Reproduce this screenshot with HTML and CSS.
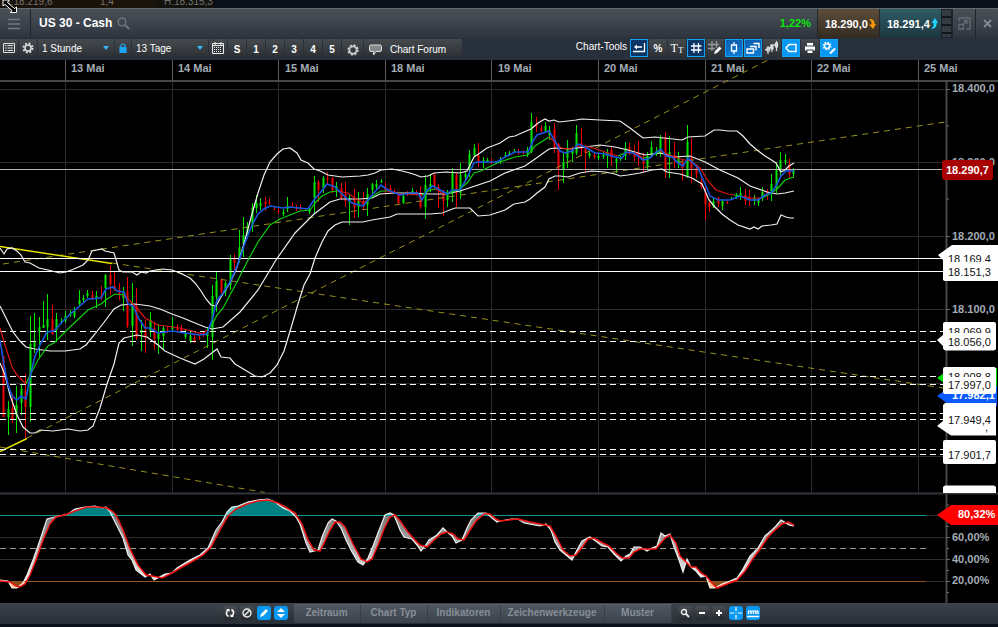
FILE: index.html
```html
<!DOCTYPE html>
<html lang="de">
<head>
<meta charset="utf-8">
<title>US 30 - Cash</title>
<link rel="stylesheet" href="styles.css">
</head>
<body>
<div class="strip"><span class="strip-price">t:18.219,6</span><span class="strip-spread">1,4</span><span>H:18.315,3</span>
  <svg class="cursor" width="20" height="16" viewBox="0 0 20 16"><path d="M3 0V6L5 4.500 12 10.500 10.500 12.500H16.500V7L14.500 8.500 7.500 2.500 9 0Z" fill="#000" stroke="#fff"/></svg>
</div>
<header class="titlebar">
  <button class="menu" aria-label="Menü"><svg width="14" height="12" viewBox="0 0 14 12"><path d="M1 1.500H13M1 6H13M1 10.500H13" stroke="#737a81" stroke-width="1.500"/></svg></button>
  <h1>US 30 - Cash</h1>
  <button class="search" aria-label="Suchen"><svg width="13" height="13" viewBox="0 0 13 13"><circle cx="5" cy="5" r="3.800" fill="none" stroke="#737a81" stroke-width="1.300"/><path d="M8 8L12 12" stroke="#737a81" stroke-width="1.800"/></svg></button>
  <span class="change">1,22%</span>
  <button class="quote sell">18.290,0<svg width="7" height="12" viewBox="0 0 7 12"><path d="M0 1C4 1 6 3 5.500 6H7L4 11 0 6.500H2.500C3 4 2 2.500 0 1Z" fill="#f90"/></svg></button>
  <button class="quote buy">18.291,4<svg width="7" height="12" viewBox="0 0 7 12"><path d="M0 11C4 11 6 8 5.500 5H7L4 0 0.500 5H2.500C3 8 2 9 0 11Z" fill="#1fd5ff"/></svg></button>
  <span class="ladder"></span>
  <button class="win" aria-label="Fenster lösen"><svg width="13" height="13" viewBox="0 0 13 13" fill="none" stroke="#646b73" stroke-width="1.300"><path d="M1 4.500V1H12V12H8.500M1 7.500H5.500V12H1ZM5.500 7L9 3.500M5.500 3.500H9V7"/></svg></button>
  <button class="win" aria-label="Schließen"><svg width="9" height="9" viewBox="0 0 9 9"><path d="M1 1L8 8M8 1L1 8" stroke="#858b92" stroke-width="1.800"/></svg></button>
</header>
<nav class="toolbar">
  <button class="tool" aria-label="Liste"><svg width="12" height="10" viewBox="0 0 12 10"><path d="M.5.5H11.500V9.500H.5ZM2 2.500H3.500M4.500 2.500H10M2 5H3.500M4.500 5H10M2 7.500H3.500M4.500 7.500H10" fill="none" stroke="#ddd"/></svg></button>
  <button class="tool" aria-label="Einstellungen"><svg width="12" height="12" viewBox="0 0 12 12"><circle cx="6" cy="6" r="4.500" fill="none" stroke="#ddd" stroke-width="2" stroke-dasharray="2 1.530"/><circle cx="6" cy="6" r="3" fill="none" stroke="#ddd" stroke-width="1.500"/></svg></button>
  <span class="pick"><select aria-label="Intervall"><option>1 Stunde</option></select></span>
  <button class="tool lock" aria-label="Sperren"><svg width="8" height="10" viewBox="0 0 8 10"><path d="M1 4.500H7V9.500H1Z" fill="#1fa7f5"/><path d="M2 5V2.500Q2 1 4 1T6 2.500V5M1 4.500H7V9.500H1Z" fill="none" stroke="#1fa7f5" stroke-width="1.200"/></svg></button>
  <span class="pick"><select aria-label="Zeitspanne"><option>13 Tage</option></select></span>
  <button class="tool" aria-label="Kalender"><svg width="12" height="12" viewBox="0 0 12 12"><path d="M.5 1.500H11.500V11.500H.5ZM.5 3.500H11.500M3 0V3M9 0V3" fill="none" stroke="#eee"/><path d="M2 5.500H10M2 7.500H10M2 9.500H10" stroke="#eee" stroke-dasharray="1 1"/></svg></button>
  <button class="tool num">S</button><button class="tool num">1</button><button class="tool num">2</button><button class="tool num">3</button><button class="tool num">4</button><button class="tool num">5</button>
  <button class="tool wide" aria-label="Optionen"><svg width="12" height="12" viewBox="0 0 12 12"><circle cx="6" cy="6" r="4.700" fill="none" stroke="#ccc" stroke-width="2" stroke-dasharray="2 1.690"/><circle cx="6" cy="6" r="3.600" fill="none" stroke="#ccc" stroke-width="1.800"/></svg></button>
  <button class="tool forum"><svg width="13" height="12" viewBox="0 0 13 12"><path d="M2 1H11Q12.500 1 12.500 2.500V6Q12.500 7.500 11 7.500H7L4.500 11V7.500H2Q.5 7.500.5 6V2.500Q.5 1 2 1Z" fill="#888" stroke="#ddd"/></svg>Chart Forum</button>
  <span class="tools-label">Chart-Tools</span>
  <button class="tool on dark" aria-label="Zurück"><svg width="14" height="14" viewBox="0 0 14 14" fill="none" stroke="#fff" stroke-width="1.300"><path d="M12.500 2V10.500H1M10 6H4"/><path d="M2 6L5 3.500V8.500Z" fill="#fff" stroke="none"/></svg></button>
  <button class="tool percent">%</button>
  <button class="tool type">T<small>T</small></button>
  <button class="tool on dark" aria-label="Gitter"><svg width="12" height="12" viewBox="0 0 12 12"><path d="M4 1V11M8.500 1V11M1 4H11.500M1 8H11.500" stroke="#fff" stroke-width="1.300"/></svg></button>
  <button class="tool" aria-label="Gitter bearbeiten"><svg width="14" height="14" viewBox="0 0 14 14"><path d="M4 0V10M8.500 0V7M0 3.500H11M0 7.500H7" stroke="#999" stroke-width="1.300"/><path d="M6 13L7 10 11.500 5.500 13.500 7.500 9 12Z" fill="#fff"/></svg></button>
  <button class="tool on" aria-label="Kerze"><svg width="10" height="12" viewBox="0 0 10 12"><path d="M5 0V3M5 9V12M2.500 3H7.500V9H2.500Z" fill="none" stroke="#fff" stroke-width="1.300"/></svg></button>
  <button class="tool on" aria-label="Ebenen"><svg width="14" height="12" viewBox="0 0 14 12" fill="none" stroke="#fff" stroke-width="1.400"><path d="M1 7H7.500V11H1ZM4 4.500H10V8.500M7.500 1.500H13V6"/></svg></button>
  <button class="tool" aria-label="Charttyp"><svg width="14" height="14" viewBox="0 0 14 14" fill="none" stroke="#ddd" stroke-width="1.200"><path d="M3 5V13M2 7H4.500V10H2ZM7 3V11M6 4H8V8H6ZM11.500 0V10M10.500 2H12.500V6H10.500ZM0 9L13 2"/></svg></button>
  <button class="tool on flat" aria-label="Etikett"><svg width="12" height="10" viewBox="0 0 12 10"><path d="M1 5L4 1.500H11V8.500H4Z" fill="none" stroke="#fff" stroke-width="1.400"/></svg></button>
  <button class="tool" aria-label="Drucken"><svg width="12" height="12" viewBox="0 0 12 12"><path d="M3 1H9V3.500H3ZM1 4.500H11V8.500H9.500V7.500H2.500V8.500H1ZM3.500 8.500H8.500V11H3.500Z" fill="#fff"/></svg></button>
  <button class="tool on flat last" aria-label="Zeichnen"><svg width="14" height="14" viewBox="0 0 14 14"><circle cx="5" cy="5" r="2.500" fill="none" stroke="#fff" stroke-width="1.400"/><circle cx="5" cy="5" r="3.800" fill="none" stroke="#fff" stroke-width="1.200" stroke-dasharray="1.500 1.480"/><path d="M8 12.500L13 7.500" stroke="#fff" stroke-width="2.200"/></svg></button>
</nav>
<main>
<svg class="chart" viewBox="0 60 998 543" role="img" aria-label="US 30 Chart">
  <defs>
    <clipPath id="high"><path d="M0 494H945V515.500H0Z"/></clipPath>
    <clipPath id="low"><path d="M0 581.500H945V603H0Z"/></clipPath>
    <linearGradient id="gap" gradientUnits="userSpaceOnUse" x1="0" y1="515" x2="0" y2="582"><stop offset="0" stop-color="#777"/><stop offset="1" stop-color="#eee"/></linearGradient>
  </defs>
  <path class="grid" d="M65.500 82V493M172.500 82V493M278.500 82V493M385.500 82V493M491.500 82V493M598.500 82V493M705.500 82V493M811.500 82V493M918.500 82V493M0 89.500H945M0 162.500H945M0 236.500H945M0 309.500H945M0 383.500H945M0 456.500H945M0 537.500H945M0 559.500H945M926 515.500H945M926 581.500H945"/>
  <path class="daymark" d="M65.500 60V80M172.500 60V80M278.500 60V80M385.500 60V80M491.500 60V80M598.500 60V80M705.500 60V80M811.500 60V80M918.500 60V80"/>
  <path d="M0 81H998" stroke="#484848" stroke-width="2"/>
  <path d="M946.500 82V603" stroke="#484848" stroke-width="2"/>
  <path d="M946 89.500H950M946 126H949M946 162.500H950M946 199H949M946 236.500H950M946 309.500H950M946 505H949M946 526.500H949M946 537.500H950M946 548.500H949M946 559.500H950M946 570.500H949M946 581.500H950M946 592.500H949" stroke="#666"/>
  <g class="axis">
    <text x="71" y="72">13 Mai</text><text x="178" y="72">14 Mai</text><text x="285" y="72">15 Mai</text><text x="391" y="72">18 Mai</text><text x="498" y="72">19 Mai</text><text x="604" y="72">20 Mai</text><text x="711" y="72">21 Mai</text><text x="817" y="72">22 Mai</text><text x="924" y="72">25 Mai</text>
    <text x="952" y="92">18.400,0</text><text x="952" y="166">18.300,0</text><text x="952" y="240">18.200,0</text><text x="952" y="313">18.100,0</text>
    <text x="952" y="541">60,00%</text><text x="952" y="563">40,00%</text><text x="952" y="584">20,00%</text>
  </g>
  <g id="candles"></g>
  <path class="trend dashed" d="M112 263L943 388M27 438L768 60M3 264L945 122M0 447L265 492.500"/>
  <path class="trend" d="M0 246.500L112 263.500M0 451.500L27 438.500"/>
  <path d="M0 169.500H945" stroke="#b4b4b4"/>
  <path class="level" d="M0 258.500H945M0 271.500H998"/>
  <path class="level dashes" d="M0 331.500H945M0 341.500H945M0 376.500H945M0 384.500H945M0 413.500H945M0 419.500H945M0 449.500H945M0 454.500H945"/>
  <polyline class="band" points="0,248 4,254 7,249 12,248 17,251 21,255 25,262 30,263 39,268 48,270 60,273 66,272 74,269 83,265 88,260 92,251 102,249 105,251 114,253 119,270 123,272 132,272 137,275 141,272 146,273 150,271 163,269 172,270 180,273 190,278 195,283 201,291 206,299 211,305 216,306 221,297 230,283 236,270 240,257 245,240 252,214 258,193 264,175 270,162 277,154 283,149 290,148 297,153 301,160 308,163 314,169 320,171 328,175 342,177 360,176 368,175 375,173 381,170 392,169 402,171 410,173 416,175 421,177 428,176 434,173 446,172 460,173 467,171 474,157 480,153 487,148 495,145 500,143 509,137 515,136 524,132 531,129 538,123 545,119 549,121 554,120 559,122 568,121 576,120 582,119 600,120 620,121 630,128 643,138 655,137 664,138 682,140 688,137 705,136 714,130 720,130 728,131 737,131 743,136 750,144 757,150 765,156 770,159 776,163 781,172 785,170 789,166 794,163"/>
  <polyline class="band" points="0,306 6,318 13,332 20,341 26,347 35,349 50,351 65,351 80,349 86,345 95,334 105,321 114,309 121,305 135,304 150,306 160,309 172,314 183,318 195,323 205,327 212,329 223,327 240,312 258,290 276,260 295,233 314,214 330,202 340,199 360,199 372,198 380,194 395,193 410,193 430,194 445,194 460,191 475,186 490,181 505,173 525,166 535,159 549,149 555,148 570,149 585,147 600,145 615,147 628,150 645,155 660,153 675,157 690,156 705,162 720,170 738,178 750,186 767,192 777,194 785,193 794,191"/>
  <polyline class="band" points="0,363 5,375 10,395 17,415 23,427 30,433 35,433 40,430 53,431 68,429 80,431 88,430 93,426 100,408 107,384 114,364 119,343 124,338 137,335 147,337 158,345 165,351 180,358 195,364 204,359 217,349 221,357 230,358 235,364 245,370 255,376 262,377 270,373 277,365 284,351 291,328 298,304 304,285 310,274 315,258 322,242 328,231 335,225 342,222 363,222 372,220 390,217 397,214 430,214 442,213 455,208 470,208 478,216 490,215 505,210 514,204 525,202 530,199 537,193 545,187 549,179 555,176 560,176 568,177 580,173 592,171 605,172 615,174 620,176 628,175 640,173 652,170 662,169 667,172 680,174 692,178 702,184 709,200 714,206 722,214 730,220 738,225 750,229 754,227 758,229 762,226 771,225 777,224 781,215 786,217 790,218 794,218"/>
  <path class="up" d="M26 384L30 375 38 360 48 346 54 343 70 327 88 310 101 304 107 299 115 294 123 295M207 330L212 325 217 315 223 308 230 295 238 280 247 262 258 242 270 225 280 219 300 211 310 210 316 202 322 196 330 192 337 191M367 201L376 194 381 191 387 191M422 195L430 190 436 189M447 194L460 189 468 182 474 173 481 171 497 163 515 157 528 155 535 146 549 137M618 156L625 153M643 158L650 157 660 151M734 195L742 196M762 198L770 194 778 188 785 180 794 177"/>
  <path class="down" d="M0 328L5 345 12 367 17 375 26 384M123 295L130 301 136 307 145 318 158 325 180 328 203 334 207 330M337 191L348 193 356 199 362 202 367 201M387 191L400 194 422 195M436 189L442 193 447 194M549 137L555 142 561 148 570 149 577 146 590 147 605 152 618 156M625 153L636 153 643 158M660 151L672 156 684 160 690 160 700 168 708 181 716 190 728 194 734 195M742 196L750 198 762 198"/>
  <polyline class="fast" points="0,340 4,365 8,385 12,396 17,400 21,396 26,399 30,377 35,356 41,343 47,332 54,331 65,319 75,310 88,299 101,298 106,289 113,287 117,291 124,292 128,304 133,306 139,319 145,328 150,328 158,333 172,331 185,333 200,335 207,334 212,320 217,300 223,293 230,282 238,264 245,243 252,225 258,214 264,209 270,206 283,208 290,207 308,209 314,200 320,193 327,184 335,187 342,194 352,203 363,206 372,195 381,185 388,190 400,195 412,193 418,193 422,200 427,190 433,186 440,190 447,194 452,190 460,190 467,178 474,163 478,162 497,162 505,157 515,152 528,152 533,141 537,135 549,131 555,141 560,151 565,153 572,151 578,144 585,147 595,153 605,154 615,157 622,158 626,152 634,153 643,160 650,158 655,153 661,149 666,156 672,157 678,163 683,166 688,158 698,168 705,184 710,196 718,200 730,200 740,196 750,200 758,200 765,195 771,193 776,186 781,176 786,171 794,171"/>
  <g id="oscillator"></g>
  <path d="M0 515.500H926" stroke="#109a9a"/><path d="M0 581.500H926" stroke="#95541f"/>
  <path d="M0 548.500H926" stroke="#999" stroke-dasharray="6 4"/>
  <g id="osc-lines"></g>
  <path d="M0 493.500H998" stroke="#31373d" stroke-width="2"/>
  <g class="tag">
    <path d="M938 255L952 245H998V281H945L943 279V260Z"/><text x="948" y="263">18.169,4</text>
    <rect x="943" y="262" width="53" height="19" rx="2"/><text x="948" y="276">18.151,3</text>
    <rect x="943" y="322" width="53" height="28" rx="2"/><text x="948" y="336">18.069,9</text>
    <path d="M937 340L943 335 945 333H996V349L994 350.500H945L943 346Z"/><text x="948" y="346">18.056,0</text>
    <path class="tag-green" d="M937 378L951 368H997V388H951Z"/>
    <rect x="943" y="367" width="53" height="26" rx="2"/><text x="948" y="381">18.008,8</text>
    <path class="tag-blue" d="M937 396L951 386H997V406H951Z"/><text class="tag-light" x="952" y="399">17.982,1</text>
    <rect x="943" y="377" width="53" height="17" rx="2"/><text x="948" y="389">17.997,0</text>
    <path d="M937 426L943 421V405L945 403H996V435.500H951Z"/><text x="948" y="424">17.949,4</text><text x="985" y="431">,</text>
    <rect x="943" y="440" width="53" height="24" rx="2"/><text x="948" y="459">17.901,7</text>
    <path d="M943 493V487L945 485.500H994L996 487V493Z"/>
    <path class="tag-red" d="M937 515L951 505H998V525H951Z"/><text class="tag-light" x="958" y="518">80,32%</text>
    <rect class="tag-price" x="942" y="160" width="51" height="20" rx="3"/><text class="tag-light" x="946" y="174">18.290,7</text>
  </g>
</svg>
</main>
<footer class="bottom">
  <div class="rounds">
    <button class="round" aria-label="Neu laden"><svg width="10" height="10" viewBox="0 0 10 10" fill="none" stroke="#fff" stroke-width="1.500"><path d="M3.500 8.500Q1 7 1.500 4.500T4 1.500M6.500 1.500Q9 3 8.500 5.500T6 8.500"/><path d="M1 1H4.500V4ZM9 9H5.500V6Z" fill="#fff" stroke="none"/></svg></button>
    <button class="round" aria-label="Deaktivieren"><svg width="10" height="10" viewBox="0 0 10 10" fill="none" stroke="#eee" stroke-width="1.400"><circle cx="5" cy="5" r="4"/><path d="M2 8L8 2"/></svg></button>
    <button class="round blue" aria-label="Stift"><svg width="10" height="10" viewBox="0 0 10 10"><path d="M1 9L2 6 7 1 9 3 4 8Z" fill="#fff"/></svg></button>
    <button class="round blue" aria-label="Höhe"><svg width="10" height="10" viewBox="0 0 10 10"><path d="M5 0L9 4H1ZM5 10L9 6H1Z" fill="#fff"/></svg></button>
  </div>
  <div class="tabs"><button>Zeitraum</button><button>Chart Typ</button><button>Indikatoren</button><button>Zeichenwerkzeuge</button><button>Muster</button></div>
  <div class="rounds">
    <button class="round" aria-label="Lupe"><svg width="10" height="10" viewBox="0 0 10 10" fill="none" stroke="#eee"><circle cx="4" cy="4" r="2.500" stroke-width="1.400"/><path d="M6 6L9 9" stroke-width="1.800"/></svg></button>
    <button class="round" aria-label="Verkleinern"><svg width="10" height="10" viewBox="0 0 10 10"><path d="M2 5H8" stroke="#fff" stroke-width="2"/></svg></button>
    <button class="round" aria-label="Vergrößern"><svg width="10" height="10" viewBox="0 0 10 10"><path d="M2 5H8M5 2V8" stroke="#fff" stroke-width="2"/></svg></button>
    <button class="round blue" aria-label="Fadenkreuz"><svg width="12" height="12" viewBox="0 0 12 12"><path d="M0 6H4M8 6H12M6 0V4M6 8V12M5.500 6H6.500" stroke="#fff" stroke-width="1.200"/></svg></button>
    <button class="round blue" aria-label="Werte"><svg width="12" height="10" viewBox="0 0 12 10"><path d="M0 8.500H12M1.500 3V6M4 3V6M6.500 3V6M9 3V6M11 3V6" stroke="#fff" stroke-width="1.400"/><path d="M1 3H11" stroke="#fff"/></svg></button>
  </div>
</footer>
<script src="chart.js"></script>
</body>
</html>
```
FILE: styles.css
```css
* { box-sizing: border-box; }
body { margin: 0; min-height: 100vh; background: #0b1119; font-family: "Liberation Sans", Arial, sans-serif; font-size: 10px; color: #fff; }
button, select { font: inherit; color: inherit; border: 0; margin: 0; padding: 0; background: none; border-radius: 0; }
svg { display: block; }

.strip { display: flex; height: 8px; overflow: hidden; background: linear-gradient(90deg, #17110a 0, #1c140a 150px, #11110f 165px, #11110f 213px, #0a1119 216px); color: #77736d; line-height: 3px; }
.strip-price { flex: 0 0 92px; padding-left: 8px; }
.strip-spread { flex: 0 0 72px; padding-left: 8px; }
.cursor { position: fixed; top: 0; left: 0; z-index: 2; }

.titlebar { display: flex; align-items: stretch; height: 30px; border-top: 1px solid #656b71; background: linear-gradient(#4a5158, #2d343e); }
.menu { width: 31px; padding-left: 7px; border-right: 1px solid #1f252c; }
.titlebar h1 { margin: 0; padding-left: 8px; font-size: 12px; line-height: 28px; }
.search { padding-left: 5px; }
.change { margin-left: auto; padding-right: 6px; font-size: 11px; font-weight: bold; line-height: 28px; color: #0ce60c; }
.quote { display: flex; align-items: center; width: 62px; padding-left: 7px; gap: 1px; font-size: 11px; font-weight: bold; border-left: 1px solid #20262c; }
.sell { background: linear-gradient(#5c4d38, #332c22); }
.buy { background: linear-gradient(#315c66, #1c363f); }
.ladder { width: 11px; border: 1px solid #1c2229; background: repeating-linear-gradient(#343b43 0 6px, #12171c 6px 8px); }
.win { display: flex; align-items: center; justify-content: center; width: 23px; border-left: 1px solid #20262c; }

.toolbar { display: flex; align-items: flex-start; gap: 1px; height: 22px; padding-top: 1px; background: #28303b; }
.tool { display: flex; align-items: center; justify-content: center; width: 18px; height: 18px; flex: none; background: linear-gradient(#454a4f, #2c3035); }
.num, .percent { font-weight: bold; }
.num, .wide, .forum { padding-top: 3px; }
.lock { width: 16px; }
.wide { width: 21px; }
.forum { width: 98px; justify-content: flex-start; padding-left: 5px; gap: 8px; }
.type { font: 12px "Liberation Serif", serif; }
.type small { font-size: 9px; padding-top: 3px; }
.pick { display: grid; width: 76px; height: 18px; background: linear-gradient(#454a4f, #2c3035); }
.pick select { grid-area: 1 / 1; appearance: none; padding-left: 4px; width: 100%; }
.pick option { color: #000; }
.pick::after { content: ""; grid-area: 1 / 1; align-self: center; justify-self: end; width: 6px; height: 4px; margin-right: 5px; background: #35b8ff; clip-path: polygon(0 0, 100% 0, 50% 100%); pointer-events: none; }
.tools-label { margin-left: auto; padding-right: 2px; line-height: 16px; }
.on { border: 1px solid #16a0f0; background: linear-gradient(#0c5fb0, #0d78d2); }
.on.dark { background: #0a3566; }
.on.flat { background: #0798f4; }
.last { margin-right: 160px; }

main { background: #000; }
.chart { width: 100%; height: auto; font: bold 11px "Liberation Sans", Arial, sans-serif; fill: none; }
.grid { stroke: #2c2c2c; }
.daymark { stroke: #5a5a5a; }
.axis { fill: #a4acb6; }
.trend { stroke: #e6e600; stroke-width: 1.4; }
.trend.dashed { stroke: #99901a; stroke-width: 1; stroke-dasharray: 6 5; }
.level { stroke: #fff; }
.dashes { stroke-dasharray: 6 4; }
.band { stroke: #f0f0f0; stroke-width: 1.2; }
.up { stroke: #0fd00f; stroke-width: 1.2; }
.down { stroke: #dc1414; stroke-width: 1.2; }
.fast { stroke: #1458e0; stroke-width: 1.6; }
.wick-g, .body-g { stroke: #00e600; }
.wick-r, .body-r { stroke: #f00000; }
.body-g, .body-r { stroke-width: 2; }
.osc-gap { fill: url(#gap); }
.osc-high { fill: #008080; }
.osc-high-gap { fill: #55c4c4; }
.osc-low { fill: #8a4a14; }
.osc-low-gap { fill: #ffc090; }
.osc-fast { stroke: #f0f0f0; stroke-width: 1.2; }
.osc-slow { stroke: #f01010; stroke-width: 1.5; }
.tag { fill: #fff; }
.tag text { fill: #111; font-weight: normal; }
.tag .tag-light { fill: #fff; font-weight: bold; }
.tag-green { fill: #00e000; }
.tag-blue { fill: #0a5aff; }
.tag-red { fill: #f00; }
.tag-price { fill: #a80000; }

.bottom { display: flex; align-items: stretch; justify-content: center; height: 21px; padding-right: 16px; background: linear-gradient(#3c434b, #292f37); }
.rounds { display: flex; align-items: center; gap: 3px; padding: 0 6px 2px; }
.round { display: flex; align-items: center; justify-content: center; width: 14px; height: 14px; border-radius: 3px; background: linear-gradient(#4a4e53, #25282c); }
.round.blue { background: #0798f4; }
.tabs { display: grid; grid-template-columns: 67px 67px 73px 104px 67px; margin: 1px 0; border-top: 1px solid #59616a; background: linear-gradient(#4e565f, #3b424b); }
.tabs button { padding-bottom: 3px; font-weight: bold; color: #878e98; border-right: 1px solid #363d46; }
```
FILE: chart.js
```js
// Each candle: colour, x, high, low and optionally body top, body bottom.
const candles = `r 3.5 356 417 356 417;g 8.5 401 435 409 417;r 12.5 394 423 408 420;g 16.5 386 433 405 415;g 21.5 385 415 389 403;r 25.5 374 440 390 407;g 30.5 316 422 344 407;g 34.5 313 353 341 347;g 39.5 317 358 327 332;g 43.5 301 328 325 328;g 47.5 294 340 319 327;r 52.5 305 335 319 334;g 56.5 313 342 319 330;g 61.5 318 324;g 65.5 311 323;g 70.5 310 317;g 74.5 307 318;g 79.5 290 307 300 304;g 83.5 295 302;g 87.5 290 298;r 92.5 291 300;g 96.5 291 308 296 299;r 101.5 286 300 296 298;g 105.5 274 307 275 288;r 110.5 265 295 275 284;r 114.5 272 291 286 289;r 119.5 283 300 290 294;g 123.5 287 311 293 298;r 127.5 277 328 291 326;g 132.5 283 346 303 326;r 136.5 288 340 306 338;g 141.5 320 351 330 333;r 145.5 320 353 330 338;g 150.5 312 337 320 332;r 154.5 322 350 328 339;g 158.5 324 354 333 339;g 163.5 326 349 328 336;r 167.5 327 333;g 172.5 317 332 326 329;r 177.5 324 332;r 181.5 325 333;g 185.5 330 339;g 190.5 332 343;r 194.5 334 343;r 199.5 335 340;r 203.5 331 337;g 207.5 328 348 332 336;g 212.5 285 360 296 337;g 216.5 272 312 281 297;r 221.5 278 294 280 292;g 225.5 281 296 283 292;g 230.5 255 290 259 285;r 234.5 254 270 258 263;g 239.5 230 263 247 260;g 243.5 217 257 235 244;g 247.5 222 237 226 233;g 252.5 203 232 208 225;g 256.5 195 213 203 208;g 260.5 198 210 203 206;r 265.5 197 211 202 204;r 269.5 199 205;r 274.5 207 210;r 278.5 208 214;g 283.5 209 216;g 287.5 197 212 206 209;r 292.5 202 208;r 296.5 205 211;r 300.5 204 210;r 305.5 208 211;g 309.5 207 214;g 314.5 176 213 182 198;r 318.5 180 202 182 190;g 323.5 176 193 178 188;r 327.5 172 185 178 180;r 332.5 177 193 178 190;g 336.5 182 197 186 190;r 341.5 183 200 188 198;r 345.5 182 207 194 201;g 349.5 194 225 198 202;r 354.5 189 218 200 207;g 358.5 192 217 201 207;r 363.5 192 210 202 207;g 367.5 188 216 194 205;g 372.5 183 195 184 190;g 376.5 180 189;g 381.5 179 183;r 385.5 182 193 186 191;r 390.5 185 193;r 394.5 189 193;r 398.5 193 205 195 203;g 403.5 193 204 196 203;r 407.5 191 196;g 412.5 188 195;r 416.5 190 195;r 420.5 186 209 194 207;g 425.5 175 219 185 207;g 430.5 174 192 184 188;r 434.5 173 190 175 186;r 438.5 184 208 187 191;r 443.5 190 216 192 201;g 447.5 190 207 192 200;g 452.5 168 202 173 194;r 456.5 173 207 175 194;g 460.5 163 199 175 193;g 465.5 172 182 174 177;g 469.5 150 177 154 170;g 474.5 144 157 148 155;r 478.5 143 167 155 162;g 483.5 157 168 160 163;g 487.5 158 163;r 491.5 158 164;g 496.5 161 164;g 500.5 157 164;g 505.5 152 158;g 509.5 151 156;g 514.5 149 153;r 518.5 149 155;r 523.5 150 155;g 527.5 147 157 150 154;g 531.5 113 153 122 152;r 536.5 117 132 124 127;r 541.5 125 133;g 545.5 122 133 126 131;g 549.5 126 140 130 135;r 554.5 123 153 129 148;r 558.5 143 190 144 170;g 563.5 152 183 162 170;g 567.5 140 168 150 158;g 572.5 147 162 150 154;g 576.5 125 155 133 153;r 581.5 128 156 143 149;r 585.5 145 172 147 153;g 589.5 150 158;r 594.5 152 159;g 598.5 153 160;g 603.5 152 159;g 607.5 149 168 153 156;r 611.5 147 166 150 158;g 616.5 158 173 159 162;g 620.5 156 161;g 625.5 142 160 148 156;r 629.5 143 155 147 153;r 634.5 145 161 151 157;r 638.5 141 166 153 156;r 643.5 153 172 157 164;g 647.5 152 169 156 166;g 651.5 141 157 147 154;g 656.5 147 156;g 660.5 135 157 138 153;r 665.5 132 178 137 171;g 669.5 136 178 152 158;r 674.5 142 168 155 160;g 678.5 152 168 157 164;r 682.5 159 181 162 168;g 687.5 125 178 142 176;r 691.5 138 183 157 170;r 696.5 164 178 168 174;r 701.5 178 189 181 187;r 705.5 187 220 192 204;r 709.5 202 212 203 207;g 713.5 197 208 201 206;r 718.5 197 207 198 204;g 722.5 199 210 201 206;r 727.5 200 204;g 731.5 197 200;g 736.5 193 199;g 740.5 187 200 193 196;r 745.5 189 205 195 201;r 749.5 190 206 197 200;g 754.5 195 205 198 201;g 758.5 198 206 199 203;g 762.5 187 201 192 198;r 767.5 189 200 191 194;g 771.5 174 201 184 194;g 776.5 162 193 170 188;g 780.5 152 177 160 172;g 785.5 154 165 160 162;r 789.5 159 179 164 174;g 793.5 168 177 170 174`;
const shapes = { "body-g": "", "body-r": "", "wick-g": "", "wick-r": "" };
for (const row of candles.split(";")) {
  const [colour, ...rest] = row.split(" ");
  const [x, high, low, top = high + 1 + Math.floor((low - high) / 3), bottom = low - 2] = rest.map(Number);
  shapes["wick-" + colour] += `M${x} ${high}V${low}`;
  shapes["body-" + colour] += `M${x} ${top}V${Math.max(bottom, top + 1)}`;
}
document.getElementById("candles").innerHTML = Object.entries(shapes)
  .map(([name, d]) => `<path class="${name}" d="${d}"/>`).join("");

const fast = "0,580 8,581 12,588 17,588 23,583 27,575 33,560 40,540 47,519 55,517 68,514 75,509 85,507 95,506 102,508 106,507 110,512 114,520 119,530 123,538 128,555 132,560 136,570 145,577 150,574 154,580 165,574 172,573 177,568 190,560 200,555 208,548 216,530 222,522 227,512 232,507 238,506 248,502 258,500 268,499 275,502 283,508 290,511 296,517 300,524 306,543 310,552 318,550 322,537 328,523 332,519 336,521 341,528 346,540 352,552 358,562 363,565 368,558 373,546 378,533 385,515 390,513 394,515 400,530 404,537 412,539 417,545 421,551 425,546 429,540 437,535 443,528 447,532 452,536 456,543 462,540 467,528 471,520 478,513 486,513 491,517 497,522 500,521 512,519 518,519 524,523 540,526 546,524 551,530 555,542 560,550 566,555 572,560 577,550 582,541 590,537 597,542 602,546 608,547 614,554 621,561 626,556 630,554 634,547 640,547 647,551 652,548 657,546 661,533 665,536 670,534 674,547 679,560 683,572 687,559 691,567 696,571 701,577 706,576 710,588 715,588 722,584 730,581 737,578 743,569 750,556 758,548 765,536 772,530 776,526 781,520 786,523 789,525 794,526";
const slow = "0,581 10,582 16,586 20,587 25,584 30,575 36,560 43,540 50,524 56,517 65,515 75,511 87,507 98,507 107,508 112,511 116,515 123,530 130,549 138,565 146,575 152,576 162,578 172,573 182,567 193,561 203,555 211,547 220,530 228,516 236,509 247,504 258,501 268,500 278,503 287,508 295,513 302,524 308,540 314,550 320,551 325,541 330,530 335,522 340,522 345,527 353,544 361,559 367,562 372,559 378,545 384,529 390,517 395,515 401,522 407,531 414,539 420,545 427,547 433,541 441,534 447,532 453,534 458,539 464,540 470,530 476,521 484,514 490,514 496,519 500,521 518,519 530,522 550,526 556,536 563,550 570,556 576,555 583,546 588,539 594,538 601,542 609,546 617,554 622,558 629,558 634,552 640,549 650,549 656,549 660,544 665,538 670,535 676,543 680,556 686,562 691,567 696,567 701,573 706,576 712,583 717,588 727,584 737,580 745,571 752,560 760,549 768,537 775,530 782,524 788,522 794,525";
const between = fast + " " + slow.split(" ").reverse().join(" ");
document.getElementById("oscillator").innerHTML = `
  <polygon class="osc-gap" points="${between}"/>
  <g clip-path="url(#high)"><polygon class="osc-high" points="0,600 ${slow} 794,600"/><polygon class="osc-high-gap" points="${between}"/></g>
  <g clip-path="url(#low)"><polygon class="osc-low" points="0,500 ${slow} 794,500"/><polygon class="osc-low-gap" points="${between}"/></g>`;
document.getElementById("osc-lines").innerHTML = `
  <polyline class="osc-fast" points="${fast}"/><polyline class="osc-slow" points="${slow}"/>`;
```
